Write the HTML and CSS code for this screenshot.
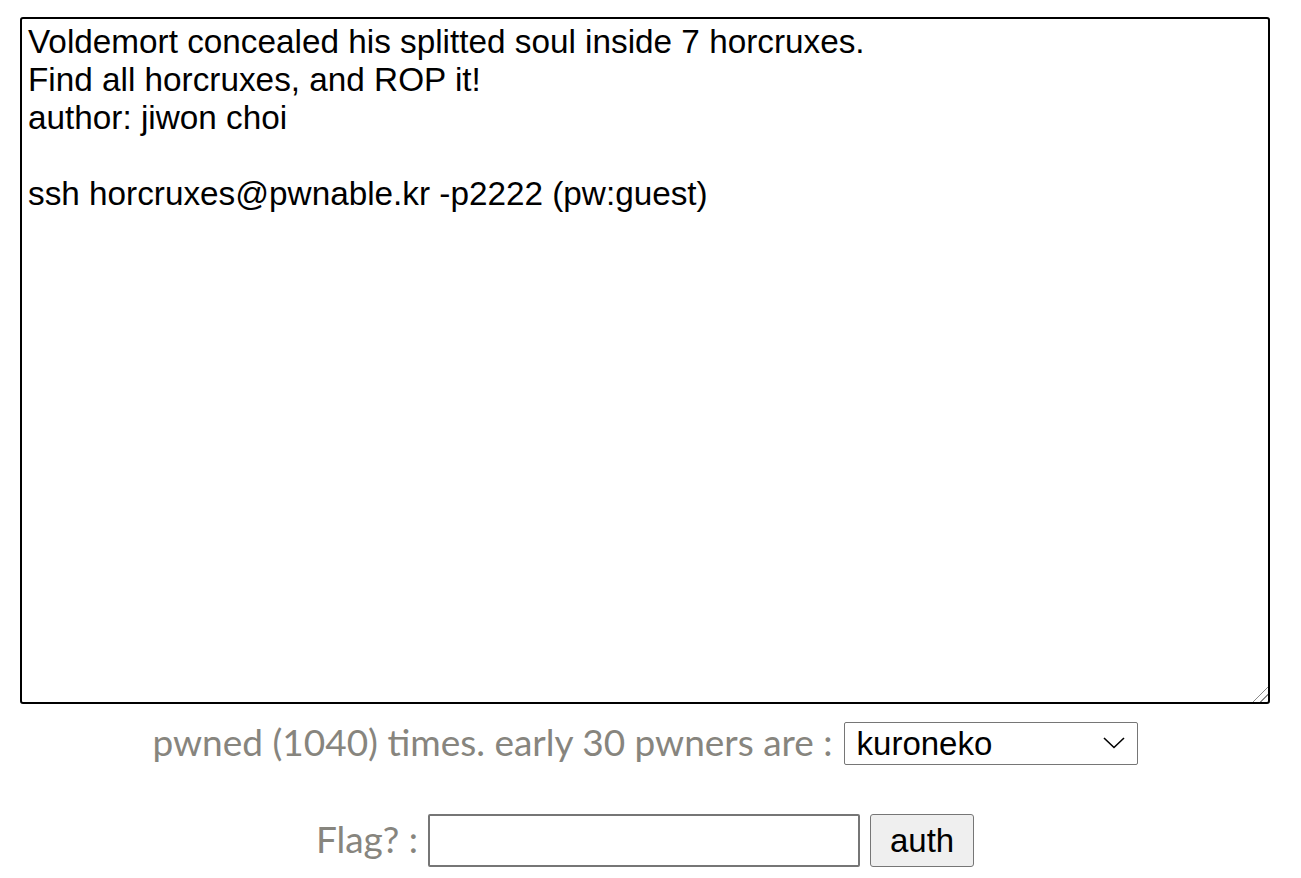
FILE: index.html
```html
<!DOCTYPE html>
<html>
<head>
<meta charset="utf-8">
<link rel="stylesheet" href="styles.css">
</head>
<body>
<div class="page">
<textarea class="desc">Voldemort concealed his splitted soul inside 7 horcruxes.
Find all horcruxes, and ROP it!
author: jiwon choi

ssh horcruxes@pwnable.kr -p2222 (pw:guest)</textarea>
<div class="row stats">
<span class="label">pwned (1040) times. early 30 pwners are :</span>
<span class="select-wrap">
<select class="pwners"><option>kuroneko</option></select>
<svg class="chevron" width="22" height="12" viewBox="0 0 22 12"><path d="M1 1 L11 10.5 L21 1" fill="none" stroke="#000" stroke-width="1.6"/></svg>
</span>
</div>
<form class="row flag">
<span class="label">Flag? :</span>
<input class="flag-input" type="text">
<button class="auth" type="button">auth</button>
</form>
</div>
</body>
</html>
```

FILE: styles.css
```css
html, body {
  margin: 0;
  padding: 0;
  background: #fff;
}
.page {
  width: 1290px;
  display: flex;
  flex-direction: column;
  align-items: center;
}
.desc {
  box-sizing: border-box;
  width: 1250px;
  height: 687px;
  margin-top: 17px;
  border: 2px solid #000;
  border-radius: 3px;
  padding: 4px 6px 3px;
  font-family: "Liberation Sans", Arial, sans-serif;
  font-size: 33.3px;
  line-height: 38px;
  color: #000;
  resize: both;
  outline: none;
}
.desc::-webkit-scrollbar {
  width: 18px;
  height: 18px;
}
.desc::-webkit-resizer {
  background: linear-gradient(135deg, transparent 0 47%, #8a8a8a 47% 53%, transparent 53% 72%, #8a8a8a 72% 78%, transparent 78%);
}
.row {
  display: flex;
  align-items: center;
  justify-content: center;
}
.label {
  font-family: Lato, "Open Sans", sans-serif;
  font-size: 37px;
  line-height: 37px;
  color: #87857e;
  white-space: nowrap;
  margin-bottom: 5px;
}
.stats {
  margin-top: 18px;
  gap: 11px;
}
.select-wrap {
  position: relative;
  display: flex;
}
.pwners {
  box-sizing: border-box;
  width: 294px;
  height: 43px;
  border: 1px solid #767676;
  border-radius: 2px;
  background: #fff;
  font-family: "Liberation Sans", Arial, sans-serif;
  font-size: 33px;
  color: #000;
  padding: 0 8px 0 12px;
  appearance: none;
  -webkit-appearance: none;
}
.chevron {
  position: absolute;
  right: 13px;
  top: 15px;
  pointer-events: none;
}
.flag {
  margin: 49px 0 0;
  gap: 10px;
}
.flag-input {
  box-sizing: border-box;
  width: 432px;
  height: 53px;
  border: 2px solid #767676;
  border-radius: 2px;
  font-family: "Liberation Sans", Arial, sans-serif;
  font-size: 33px;
  padding: 2px 6px;
}
.auth {
  box-sizing: border-box;
  width: 104px;
  height: 53px;
  border: 1px solid #767676;
  border-radius: 3px;
  background: #efefef;
  font-family: "Liberation Sans", Arial, sans-serif;
  font-size: 33px;
  color: #000;
  padding: 0;
}
```
